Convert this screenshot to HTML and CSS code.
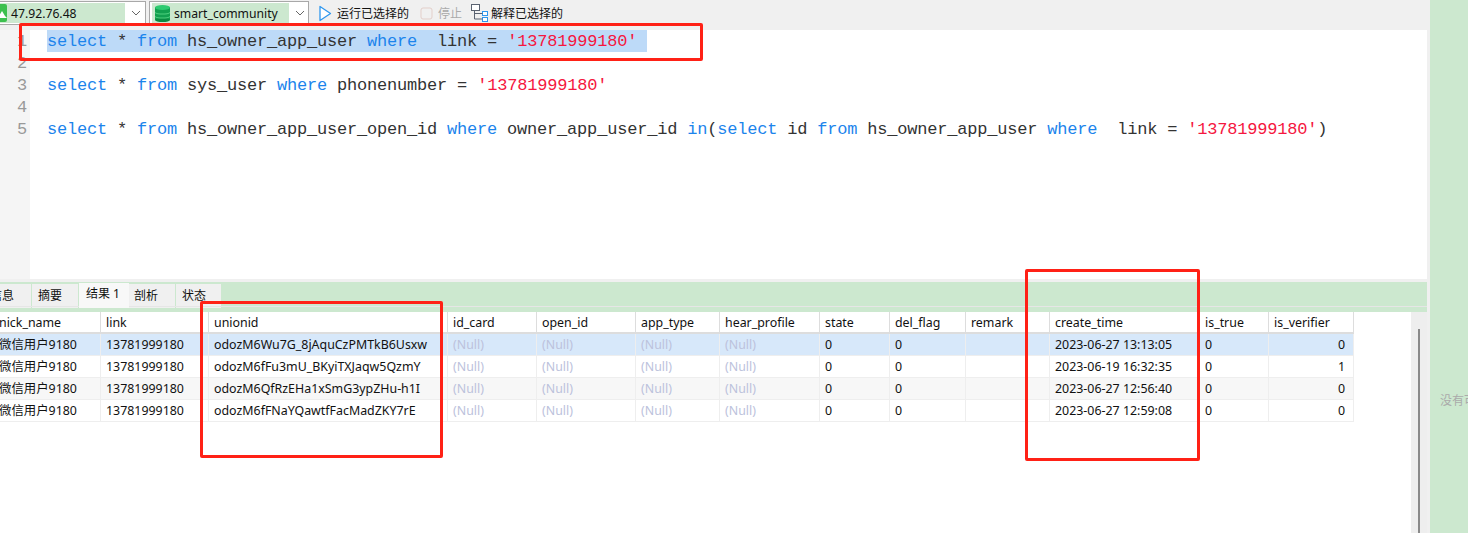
FILE: index.html
```html
<!DOCTYPE html>
<html lang="zh">
<head>
<meta charset="utf-8">
<title>Query</title>
<link rel="stylesheet" href="styles.css">
</head>
<body>
<div class="app">
  <main class="work">
    <div class="toolbar">
      <div class="combo combo-a">
        <div class="combo-value">
          <svg class="conn-icon" width="8" height="18" viewBox="0 0 8 18"><rect x="-6" y="0" width="13" height="18" rx="2" fill="#3cc04e"/><path d="M-1 12l3-5 3 5 2 2H-1z" fill="#fff"/></svg>
          <span>47.92.76.48</span>
        </div>
        <svg class="chev" width="10" height="6" viewBox="0 0 10 6"><path d="M1 1l4 4 4-4" fill="none" stroke="#666" stroke-width="1"/></svg>
      </div>
      <div class="combo combo-b">
        <div class="combo-value">
          <svg class="db-icon" width="16" height="17" viewBox="0 0 16 17"><rect y="2" width="15" height="13" fill="#12a04f"/><ellipse cx="7.500" cy="15" rx="7.500" ry="2" fill="#0b8a41"/><path d="M0 7c2 2 13 2 15 0v1c-2 2-13 2-15 0zM0 11c2 2 13 2 15 0v1c-2 2-13 2-15 0z" fill="#4fd07f"/><ellipse cx="7.500" cy="2.500" rx="7.500" ry="2.500" fill="#2ecb70"/></svg>
          <span>smart_community</span>
        </div>
        <svg class="chev" width="10" height="6" viewBox="0 0 10 6"><path d="M1 1l4 4 4-4" fill="none" stroke="#666" stroke-width="1"/></svg>
      </div>
      <button class="tool run" type="button">
        <svg width="13" height="17" viewBox="0 0 13 17"><path d="M1 1.500l10.500 7-10.500 7z" fill="#fff" stroke="#2f97ee" stroke-width="1.300" stroke-linejoin="round"/></svg>
        <span>运行已选择的</span>
      </button>
      <button class="tool stop" type="button">
        <svg width="13" height="13" viewBox="0 0 13 13"><rect x="1" y="1" width="11" height="11" rx="2" fill="none" stroke="#e3cfca" stroke-width="1"/></svg>
        <span>停止</span>
      </button>
      <button class="tool explain" type="button">
        <svg width="17" height="18" viewBox="0 0 17 18"><g fill="#fff" stroke-width="1"><rect x="0.500" y="0.500" width="8" height="6" stroke="#5a6270"/><rect x="11.500" y="7.500" width="5" height="4" stroke="#2f97ee"/><rect x="11.500" y="13.500" width="5" height="4" stroke="#2f97ee"/></g><path d="M3.500 7v8h8M3.500 9.500h8" fill="none" stroke="#5a6270"/></svg>
        <span>解释已选择的</span>
      </button>
    </div>

    <section class="editor">
      <div class="gutter">
        <div class="num-line">1</div><div class="num-line">2</div><div class="num-line">3</div><div class="num-line">4</div><div class="num-line">5</div>
      </div>
      <div class="code">
        <div class="line"><span class="sel"><b class="kw">select</b> * <b class="kw">from</b> hs_owner_app_user <b class="kw">where</b>  link = <b class="str">'13781999180'</b> </span></div>
        <div class="line"></div>
        <div class="line"><b class="kw">select</b> * <b class="kw">from</b> sys_user <b class="kw">where</b> phonenumber = <b class="str">'13781999180'</b></div>
        <div class="line"></div>
        <div class="line"><b class="kw">select</b> * <b class="kw">from</b> hs_owner_app_user_open_id <b class="kw">where</b> owner_app_user_id <b class="kw">in</b>(<b class="kw">select</b> id <b class="kw">from</b> hs_owner_app_user <b class="kw">where</b>  link = <b class="str">'13781999180'</b>)</div>
      </div>
    </section>

    <nav class="tabs">
      <div class="tab tab-info">信息</div>
      <div class="tab tab-sum">摘要</div>
      <div class="tab tab-active">结果 1</div>
      <div class="tab tab-prof">剖析</div>
      <div class="tab tab-stat">状态</div>
    </nav>

    <section class="results">
      <div class="table-wrap">
        <table class="grid">
          <thead>
            <tr>
              <th class="c1">nick_name</th><th class="c2">link</th><th class="c3">unionid</th><th class="c4">id_card</th><th class="c5">open_id</th><th class="c6">app_type</th><th class="c7">hear_profile</th><th class="c8">state</th><th class="c9">del_flag</th><th class="c10">remark</th><th class="c11">create_time</th><th class="c12">is_true</th><th class="c13">is_verifier</th>
            </tr>
          </thead>
          <tbody>
            <tr class="current">
              <td>微信用户9180</td><td>13781999180</td><td>odozM6Wu7G_8jAquCzPMTkB6Usxw</td><td class="null">(Null)</td><td class="null">(Null)</td><td class="null">(Null)</td><td class="null">(Null)</td><td>0</td><td>0</td><td></td><td>2023-06-27 13:13:05</td><td>0</td><td class="num">0</td>
            </tr>
            <tr>
              <td>微信用户9180</td><td>13781999180</td><td>odozM6fFu3mU_BKyiTXJaqw5QzmY</td><td class="null">(Null)</td><td class="null">(Null)</td><td class="null">(Null)</td><td class="null">(Null)</td><td>0</td><td>0</td><td></td><td>2023-06-19 16:32:35</td><td>0</td><td class="num">1</td>
            </tr>
            <tr class="alt">
              <td>微信用户9180</td><td>13781999180</td><td>odozM6QfRzEHa1xSmG3ypZHu-h1I</td><td class="null">(Null)</td><td class="null">(Null)</td><td class="null">(Null)</td><td class="null">(Null)</td><td>0</td><td>0</td><td></td><td>2023-06-27 12:56:40</td><td>0</td><td class="num">0</td>
            </tr>
            <tr>
              <td>微信用户9180</td><td>13781999180</td><td>odozM6fFNaYQawtfFacMadZKY7rE</td><td class="null">(Null)</td><td class="null">(Null)</td><td class="null">(Null)</td><td class="null">(Null)</td><td>0</td><td>0</td><td></td><td>2023-06-27 12:59:08</td><td>0</td><td class="num">0</td>
            </tr>
          </tbody>
        </table>
      </div>
      <div class="vscroll"><div class="vthumb"></div></div>
    </section>
  </main>
  <div class="strip"></div>
  <aside class="side">没有可用的对象信息</aside>
</div>
<div class="mark mark-sql"></div>
<div class="mark mark-union"></div>
<div class="mark mark-time"></div>
</body>
</html>
```

FILE: styles.css
```css
* { box-sizing: border-box; }
html, body { margin: 0; height: 533px; overflow: hidden; background: #f0f0f0; }
body { font-family: "Noto Sans", "Noto Sans CJK SC", sans-serif; font-size: 12.4px; color: #111; position: relative; }

.app { display: flex; width: 1468px; height: 533px; }
.work { width: 1427px; display: flex; flex-direction: column; }
.strip { width: 3px; background: #f0f0f0; }
.side { width: 38px; background: #cce8cf; color: #aaa; padding: 391px 0 0 10px; white-space: nowrap; overflow: hidden; font-size: 12px; }

/* toolbar */
.toolbar { height: 30px; display: flex; align-items: flex-start; padding-top: 1px; background: #f0f0f0; }
.combo { height: 24px; border: 1px solid #a8a8a8; background: #fff; display: flex; align-items: center; padding: 2px; position: relative; }
.combo-a { width: 146px; border-left: 0; padding-left: 0; }
.combo-b { width: 160px; margin-left: 3px; }
.combo-value { background: #cce8cf; height: 20px; display: flex; align-items: center; overflow: hidden; font-size: 12.2px; }
.combo-a .combo-value { width: 125px; }
.combo-b .combo-value { width: 137px; padding-left: 3px; }
.conn-icon { margin-right: 3px; flex: none; }
.db-icon { margin-right: 3px; flex: none; }
.chev { margin-left: 6px; flex: none; }
.tool { border: 0; background: none; padding: 0; margin: 0; height: 24px; display: flex; align-items: center; font: inherit; font-size: 12px; color: #111; }
.tool svg { flex: none; }
.run { margin-left: 10px; gap: 5px; }
.stop { margin-left: 11px; gap: 5px; color: #aaa; }
.explain { margin-left: 9px; gap: 3px; }

/* editor */
.editor { height: 249px; background: #fff; display: flex; font-family: "Liberation Mono", monospace; font-size: 17px; letter-spacing: -0.2px; line-height: 24px; }
.gutter { width: 30px; background: #f5f5f5; color: #999; text-align: right; padding-right: 3px; }
.num-line { height: 22px; }
.code { padding-left: 17px; flex: 1; color: #333; }
.line { height: 22px; white-space: pre; }
.kw { font-weight: 400; color: #1c84ec; }
.str { font-weight: 400; color: #f5173f; }
.sel { background: #bddaf8; display: inline-block; height: 22px; vertical-align: top; }

/* tabs */
.tabs { margin-top: 3px; height: 30px; background: #cce8cf; display: flex; align-items: flex-start; overflow: hidden; position: relative; padding-top: 1px; gap: 1px; }
.tabs::after { content: ""; position: absolute; left: 0; right: 0; top: 24px; height: 1px; background: #e6e6e6; }
.tab { height: 24px; background: #f0f0f0; line-height: 23px; font-size: 12px; margin-top: 1px; padding-left: 6px; white-space: nowrap; overflow: hidden; }
.tab-info { width: 31px; padding-left: 0; text-indent: -10px; }
.tab-sum { width: 46px; }
.tab-active { width: 50px; height: 25px; margin-top: 0; padding-left: 7px; background: #f8f8f8; line-height: 22px; position: relative; z-index: 1; }
.tab-prof { width: 46px; margin-left: -1px; padding-left: 5px; }
.tab-stat { width: 45px; }

/* results */
.results { flex: 1; display: flex; background: #fff; min-height: 0; }
.table-wrap { flex: 1; overflow: hidden; }
.grid { table-layout: fixed; border-collapse: separate; border-spacing: 0; width: 1360px; margin-left: -6px; }
.grid th, .grid td { height: 22px; padding: 0 5px; text-align: left; font-weight: 400; white-space: nowrap; overflow: hidden; border-right: 1px solid #eee; border-bottom: 1px solid #eee; line-height: 20px; color: #111; }
.grid th { height: 21px; padding-top: 2px; line-height: 18px; border-right-color: #ddd; border-bottom: 2px solid #ddd; }
.c1 { width: 107px; } .c2 { width: 108px; } .c3 { width: 239px; } .c4 { width: 89px; } .c5 { width: 99px; } .c6 { width: 84px; } .c7 { width: 100px; } .c8 { width: 70px; } .c9 { width: 76px; } .c10 { width: 84px; } .c11 { width: 150px; } .c12 { width: 69px; } .c13 { width: 85px; }
.grid .current td { background: #d7e8fa; }
.grid .alt td { background: #f7f7f7; }
.grid td.null { color: #bcc2dc; }
.grid td.num { text-align: right; padding-right: 8px; }
.vscroll { width: 16px; background: #eee; padding: 17px 0 0 7px; }
.vthumb { width: 2px; height: 100%; background: #8a8a8a; }

/* red annotation rectangles drawn over the screenshot */
.mark { position: absolute; border: 3px solid #ff2116; border-radius: 2px; }
.mark-sql { left: 19px; top: 23px; width: 684px; height: 38px; }
.mark-union { left: 200px; top: 301px; width: 243px; height: 157px; }
.mark-time { left: 1025px; top: 269px; width: 175px; height: 192px; }
```
